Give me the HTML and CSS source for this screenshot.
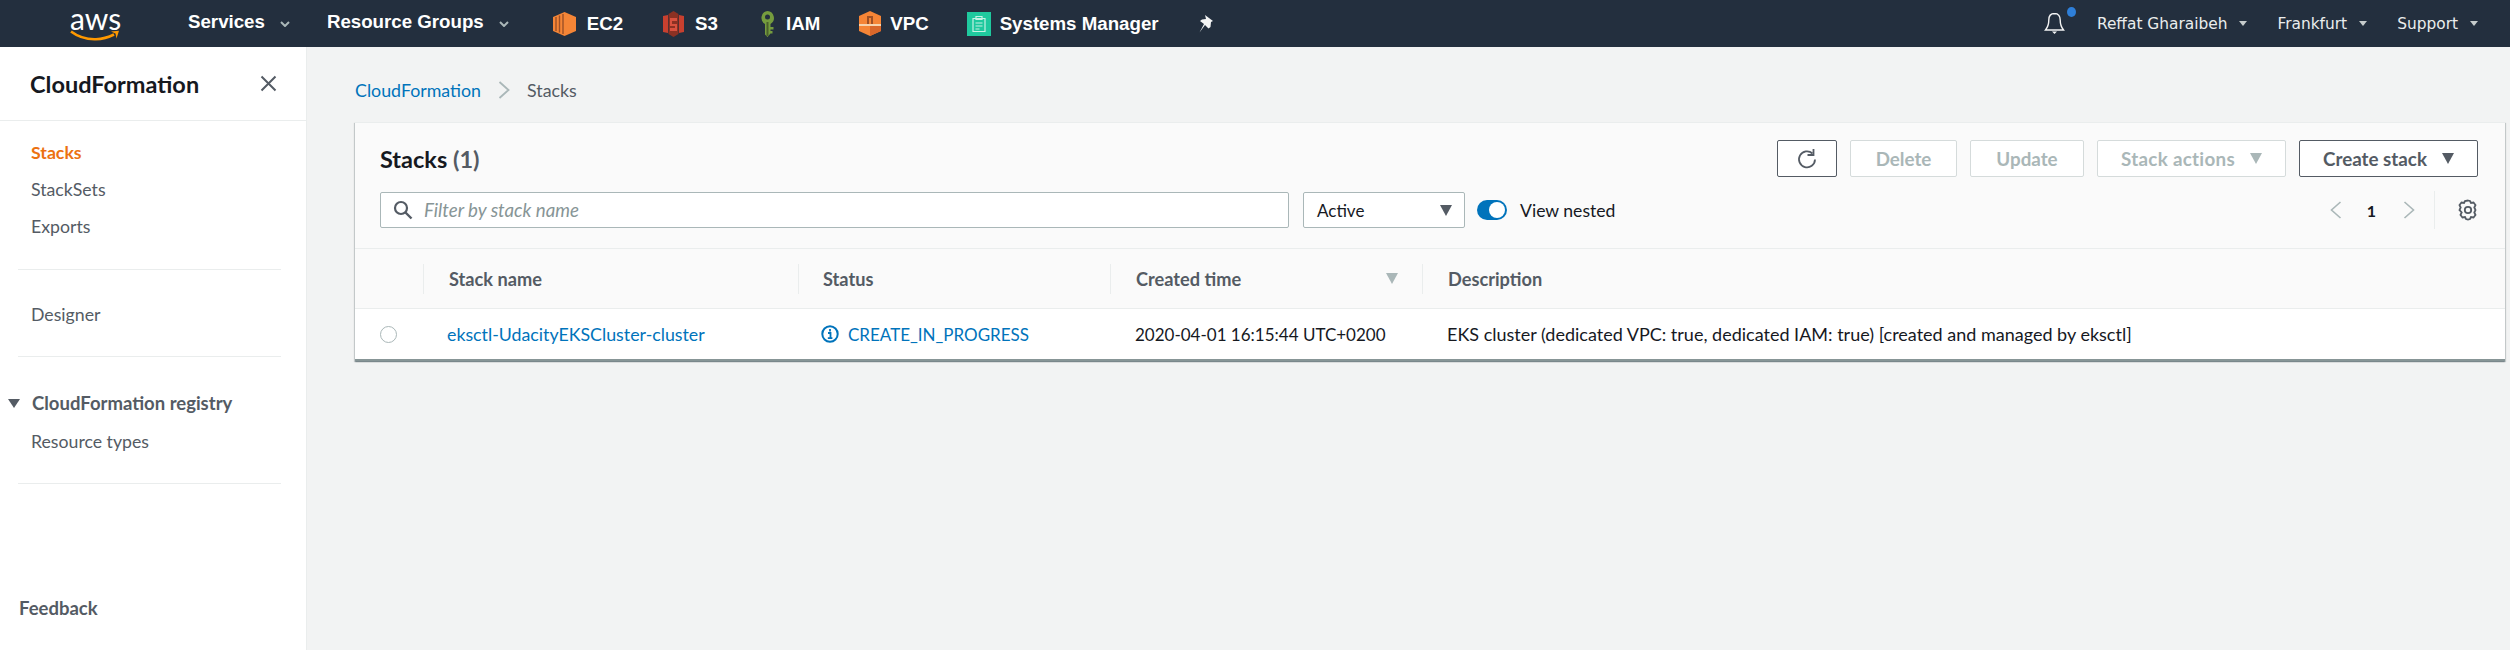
FILE: index.html
```html
<!DOCTYPE html>
<html lang="en">
<head>
<meta charset="utf-8">
<title>CloudFormation Stacks</title>
<link rel="stylesheet" href="styles.css">
</head>
<body>
<header class="topbar">
  <a class="logo"><span class="logo-text">aws</span>
    <svg class="logo-smile" width="50" height="13" viewBox="0 0 50 13"><path d="M1 2.5C9 8.5 18 10.5 26 10.2C33 10 39 8 44 5.5" fill="none" stroke="#f90" stroke-width="2.6"/><path d="M41 2.5L49 1.8L46.5 9.5L45.5 4.5Z" fill="#f90"/></svg>
  </a>
  <a class="menu menu-services">Services<svg class="chev" width="10" height="6" viewBox="0 0 10 6"><path d="M1 1l4 4 4-4" fill="none" stroke="#aab7b8" stroke-width="2"/></svg></a>
  <a class="menu menu-groups">Resource Groups<svg class="chev" width="10" height="6" viewBox="0 0 10 6"><path d="M1 1l4 4 4-4" fill="none" stroke="#aab7b8" stroke-width="2"/></svg></a>
  <a class="svc svc-ec2"><svg width="23" height="24" viewBox="0 0 23 24"><path d="M11.5 0L23 5v14l-11.5 5L0 19V5z" fill="#f58536"/><path d="M3 5v14M6.500 3.500v17M10 2v20" stroke="#9d5025" stroke-width="1.400"/></svg>EC2</a>
  <a class="svc svc-s3"><svg width="21" height="26" viewBox="0 0 21 26"><path d="M0 5l5-1v18l-5-1zM21 5l-5-1v18l5-1z" fill="#c8402f"/><path d="M10.500 0l5 3v20l-5 3-5-3V3z" fill="#8c3123"/><path d="M7 7h7v3H9v3h5v7H7v-3h5v-2H7z" fill="#d9513f"/></svg>S3</a>
  <a class="svc svc-iam"><svg width="15" height="26" viewBox="0 0 15 26"><path d="M7.500 0a7 7 0 0 1 3 13v3h3v2.500h-3v1.500h2v2.500h-2L7.500 26 5 23.500V13a7 7 0 0 1 2.500-13z" fill="#759c3e"/><circle cx="7.500" cy="6" r="2.500" fill="#232f3e"/><path d="M7.500 11v14" stroke="#4b612c" stroke-width="2"/></svg>IAM</a>
  <a class="svc svc-vpc"><svg width="22" height="25" viewBox="0 0 22 25"><path d="M11 0l11 5v15l-11 5L0 20V5z" fill="#f58536"/><path d="M0 13h22v2H0z" fill="#f6d3ad"/><path d="M8 5h6v8h-2V7h-2v6H8z" fill="#9d5025"/><path d="M11 15v10l11-5v-5z" fill="#d9672a"/></svg>VPC</a>
  <a class="svc svc-ssm"><svg width="24" height="24" viewBox="0 0 24 24"><rect width="24" height="24" fill="#1fc99e"/><path d="M6 6.500h12v13H6z" fill="none" stroke="#c5f1e4" stroke-width="1.200"/><path d="M9 4.500h6v3H9zM8.500 11h7M8.500 14h7M8.500 17h4" fill="none" stroke="#c5f1e4" stroke-width="1.200"/></svg>Systems Manager</a>
  <a class="pin"><svg width="17" height="18" viewBox="0 0 17 18"><path d="M7 0l8 6-2 1-.5 5-2 1.500L7 10l-5.500 7.500L6 9 2 6l2-1.500 4-.5z" fill="#f4f5f5"/></svg></a>
  <div class="top-right">
    <a class="bell"><svg width="21" height="23" viewBox="0 0 21 23"><path d="M10.500 1.500c-4 0-5.700 3-5.700 6.500 0 5-1.300 7.500-3.300 10h18c-2-2.500-3.300-5-3.300-10 0-3.500-1.700-6.500-5.700-6.500z" fill="none" stroke="#f4f5f5" stroke-width="1.400"/><path d="M8 19.500h5l-2.500 2.500z" fill="#f4f5f5"/></svg><span class="dot"></span></a>
    <a class="acct acct-user">Reffat Gharaibeh<span class="caret"></span></a>
    <a class="acct acct-region">Frankfurt<span class="caret"></span></a>
    <a class="acct acct-support">Support<span class="caret"></span></a>
  </div>
</header>
<div class="layout">
  <aside class="sidebar">
    <div class="side-head"><span class="side-title">CloudFormation</span>
      <svg width="17" height="17" viewBox="0 0 17 17"><path d="M1.500 1.500l14 14M15.500 1.500l-14 14" stroke="#545b64" stroke-width="2"/></svg>
    </div>
    <nav class="side-nav">
      <a class="side-link active">Stacks</a>
      <a class="side-link">StackSets</a>
      <a class="side-link">Exports</a>
      <hr class="side-rule first">
      <a class="side-link">Designer</a>
      <hr class="side-rule second">
      <div class="side-group"><span class="tri-side"></span>CloudFormation registry</div>
      <a class="side-link">Resource types</a>
      <hr class="side-rule third">
    </nav>
    <a class="feedback">Feedback</a>
  </aside>
  <main class="content">
    <div class="crumbs"><a class="crumb-link">CloudFormation</a>
      <svg width="12" height="18" viewBox="0 0 12 18"><path d="M1.500 1l9 8-9 8" fill="none" stroke="#aab7b8" stroke-width="1.800"/></svg>
      <span>Stacks</span></div>
    <section class="card">
      <div class="card-head">
        <div class="head-row">
          <h1 class="card-title">Stacks <span class="count">(1)</span></h1>
          <div class="actions">
            <button class="btn btn-refresh"><svg width="20" height="22" viewBox="0 0 20 22"><path d="M15.500 5.500A8 8 0 1 0 18 11.500" fill="none" stroke="#545b64" stroke-width="1.800"/><path d="M16.500 1v6h-6" fill="none" stroke="#545b64" stroke-width="1.800"/></svg></button>
            <button class="btn off btn-delete">Delete</button>
            <button class="btn off btn-update">Update</button>
            <button class="btn off btn-stack">Stack actions<span class="tri tri-off"></span></button>
            <button class="btn btn-create">Create stack<span class="tri"></span></button>
          </div>
        </div>
        <div class="filter-row">
          <div class="search"><svg width="20" height="20" viewBox="0 0 20 20"><circle cx="8" cy="8" r="6" fill="none" stroke="#545b64" stroke-width="2.200"/><path d="M12.500 12.500l6 6" stroke="#545b64" stroke-width="2.400"/></svg><span class="placeholder">Filter by stack name</span></div>
          <div class="select">Active<span class="tri"></span></div>
          <span class="toggle"><span class="knob"></span></span>
          <span class="toggle-label">View nested</span>
          <div class="pager">
            <svg width="12" height="18" viewBox="0 0 12 18"><path d="M10.500 1l-9 8 9 8" fill="none" stroke="#aab7b8" stroke-width="1.600"/></svg>
            <b class="page">1</b>
            <svg width="12" height="18" viewBox="0 0 12 18"><path d="M1.500 1l9 8-9 8" fill="none" stroke="#aab7b8" stroke-width="1.600"/></svg>
            <span class="pager-rule"></span>
            <svg class="gear" width="20" height="22" viewBox="0 0 20 22"><path d="M10 1.500l2 .5 1 2 2.500-.5 2 2.500-1.200 2.500 1.200 2.500-1.200 2.500 1.200 2.500-2 2.500-2.500-.5-1 2-2 .5-2-.5-1-2-2.500.5-2-2.500 1.200-2.500L1.500 11l1.200-2.500L1.500 6l2-2.500L6 4l1-2z" fill="none" stroke="#545b64" stroke-width="1.800"/><circle cx="10" cy="11" r="3.200" fill="none" stroke="#545b64" stroke-width="1.800"/></svg>
          </div>
        </div>
      </div>
      <div class="thead">
        <div class="th-blank"></div>
        <div class="th">Stack name</div>
        <div class="th th-status">Status</div>
        <div class="th th-sort">Created time<span class="tri tri-off"></span></div>
        <div class="th">Description</div>
      </div>
      <div class="trow">
        <div class="td-radio"><span class="radio"></span></div>
        <div class="td td-name"><a class="link">eksctl-UdacityEKSCluster-cluster</a></div>
        <div class="td td-status"><svg width="18" height="18" viewBox="0 0 18 18"><circle cx="9" cy="9" r="7.700" fill="none" stroke="#0073bb" stroke-width="2"/><path d="M9 4v2.400M7 8h2.500v5M6.800 13.200h4.600" fill="none" stroke="#0073bb" stroke-width="1.800"/></svg><span class="link">CREATE_IN_PROGRESS</span></div>
        <div class="td">2020-04-01 16:15:44 UTC+0200</div>
        <div class="td td-desc">EKS cluster (dedicated VPC: true, dedicated IAM: true) [created and managed by eksctl]</div>
      </div>
    </section>
  </main>
</div>
</body>
</html>
```
FILE: styles.css
```css
* { box-sizing: border-box; }
html, body { margin: 0; height: 650px; overflow: hidden; }
body { background: #f2f3f3; color: #16191f; font-family: Lato, "Noto Sans", sans-serif; font-size: 17px; }
a { color: inherit; text-decoration: none; }

.topbar { display: flex; align-items: center; height: 47px; padding-left: 70px; background: #232f3e; color: #fff; font: bold 18.7px "Liberation Sans", sans-serif; }
.logo { display: flex; flex-direction: column; width: 50px; height: 40px; align-items: flex-start; }
.logo-text { font: 400 30px/24px Lato, sans-serif; color: #fff; height: 24px; margin-top: 2px; }
.logo-smile { display: block; margin-top: -1px; }
.menu { display: flex; align-items: center; gap: 15px; margin-bottom: 4px; }
.chev { margin-top: 4px; }
.menu-services { margin-left: 68px; }
.menu-groups { margin-left: 37px; }
.svc { display: flex; align-items: center; gap: 11px; }
.svc-ec2 { margin-left: 44px; }
.svc-s3 { margin-left: 40px; }
.svc-iam { margin-left: 42px; gap: 11px; }
.svc-vpc { margin-left: 39px; gap: 9px; }
.svc-ssm { margin-left: 38px; gap: 9px; }
.pin { display: flex; margin-left: 39px; }
.top-right { display: flex; align-items: center; margin-left: auto; font: 400 15.4px "DejaVu Sans", sans-serif; color: #eaeded; }
.bell { position: relative; display: flex; margin-right: 32px; }
.dot { position: absolute; top: -5px; right: -11px; width: 9px; height: 10px; border-radius: 50%; background: #2e7fd8; }
.acct { display: flex; align-items: center; gap: 12px; }
.acct-user { margin-right: 30px; }
.acct-region { margin-right: 30px; }
.acct-support { margin-right: 32px; }
.caret { width: 0; height: 0; border-left: 4.500px solid transparent; border-right: 4.500px solid transparent; border-top: 5px solid #c6cccc; }

.layout { display: flex; height: 603px; }
.sidebar { display: flex; flex-direction: column; width: 307px; background: #fff; border-right: 1px solid #eaeded; color: #545b64; font-size: 17.7px; }
.side-head { display: flex; align-items: center; justify-content: space-between; height: 74px; padding: 0 29px 0 30px; border-bottom: 1px solid #eaeded; }
.side-title { font-size: 23.500px; font-weight: 700; color: #16191f; }
.side-nav { display: flex; flex-direction: column; padding-top: 13px; }
.side-link { display: block; height: 37px; line-height: 37px; padding-left: 31px; }
.side-link.active { color: #ec7211; font-weight: 700; }
.side-rule { width: 263px; height: 1px; margin: 0 0 0 18px; border: 0; background: #eaeded; }
.side-rule.first { margin-top: 24px; margin-bottom: 26px; }
.side-rule.second { margin-top: 23px; margin-bottom: 27px; }
.side-rule.third { margin-top: 23px; }
.side-group { display: flex; align-items: center; height: 38.500px; padding-left: 8px; font-size: 18.500px; font-weight: 700; }
.tri-side { width: 0; height: 0; margin-right: 12px; border-left: 6.500px solid transparent; border-right: 6.500px solid transparent; border-top: 9px solid #545b64; }
.feedback { margin-top: auto; margin-bottom: 31px; padding-left: 19px; font-size: 18.500px; font-weight: 700; }

.content { flex: 1; padding: 0 5px 0 48px; }
.crumbs { display: flex; align-items: center; height: 75px; padding-top: 10px; color: #545b64; font-size: 17.800px; }
.crumb-link { color: #0073bb; }
.crumbs svg { margin: 0 17px; }
.card { background: #fff; box-shadow: 0 1px 1px rgba(0,28,36,.3), 1px 1px 1px rgba(0,28,36,.15), -1px 1px 1px rgba(0,28,36,.15); border-top: 1px solid #eaeded; border-bottom: 2px solid #879596; }
.card-head { padding: 17px 27px 20px 25px; background: #fafafa; border-bottom: 1px solid #eaeded; }
.head-row { display: flex; align-items: center; justify-content: space-between; height: 37px; }
.card-title { margin: 0; font-size: 23.500px; font-weight: 700; }
.count { font-weight: 700; color: #545b64; }
.actions { display: flex; gap: 13px; }
.btn { display: flex; align-items: center; justify-content: center; height: 37px; padding: 0; border: 1px solid #545b64; border-radius: 2px; background: #fff; color: #545b64; font: 700 18.800px Lato, sans-serif; }
.btn.off { border-color: #d5dbdb; color: #aab7b8; }
.btn-refresh { width: 60px; }
.btn-delete { width: 107px; }
.btn-update { width: 114px; }
.btn-stack { width: 189px; gap: 15px; letter-spacing: .3px; }
.btn-create { width: 179px; gap: 15px; }
.tri { width: 0; height: 0; border-left: 6.500px solid transparent; border-right: 6.500px solid transparent; border-top: 11px solid #545b64; }
.tri-off { border-top-color: #aab7b8; }

.filter-row { display: flex; align-items: center; height: 36px; margin-top: 15px; }
.search { display: flex; align-items: center; gap: 11px; width: 909px; height: 36px; padding-left: 12px; background: #fff; border: 1px solid #aab7b8; border-radius: 2px; }
.placeholder { font-size: 18.700px; font-style: italic; color: #879596; }
.select { display: flex; align-items: center; justify-content: space-between; width: 162px; height: 36px; margin-left: 14px; padding: 0 12px 0 13px; background: #fff; border: 1px solid #aab7b8; border-radius: 2px; }
.toggle { display: flex; align-items: center; justify-content: flex-end; width: 30px; height: 20px; margin-left: 12px; padding-right: 2px; background: #0073bb; border-radius: 10px; }
.knob { width: 16px; height: 16px; border-radius: 50%; background: #fff; }
.toggle-label { margin-left: 13px; font-size: 17.600px; }
.pager { display: flex; align-items: center; margin-left: auto; }
.page { margin: 0 27px 0 25px; font-size: 16px; }
.pager-rule { width: 1px; height: 38px; margin: 0 23px 0 19px; background: #eaeded; }

.thead { display: grid; grid-template-columns: 68px 375px 312px 312px 1fr; align-items: center; height: 60px; background: #fafafa; border-bottom: 1px solid #eaeded; }
.th { display: flex; align-items: center; height: 30px; padding-left: 25px; border-left: 1px solid #eaeded; color: #545b64; font-size: 18.200px; font-weight: 700; }
.th-status { padding-left: 24px; }
.th-sort { justify-content: space-between; padding-right: 24px; }
.trow { display: grid; grid-template-columns: 68px 375px 312px 312px 1fr; align-items: center; height: 50px; }
.td { padding-left: 25px; }
.td-name { padding-left: 24px; font-size: 17.800px; }
.td-desc { font-size: 18px; }
.td-status { display: flex; align-items: center; gap: 9px; padding-left: 23px; }
.td-radio { padding-left: 25px; display: flex; }
.radio { width: 17px; height: 17px; border: 1px solid #aab7b8; border-radius: 50%; background: #fff; }
.link { color: #0073bb; }
```
